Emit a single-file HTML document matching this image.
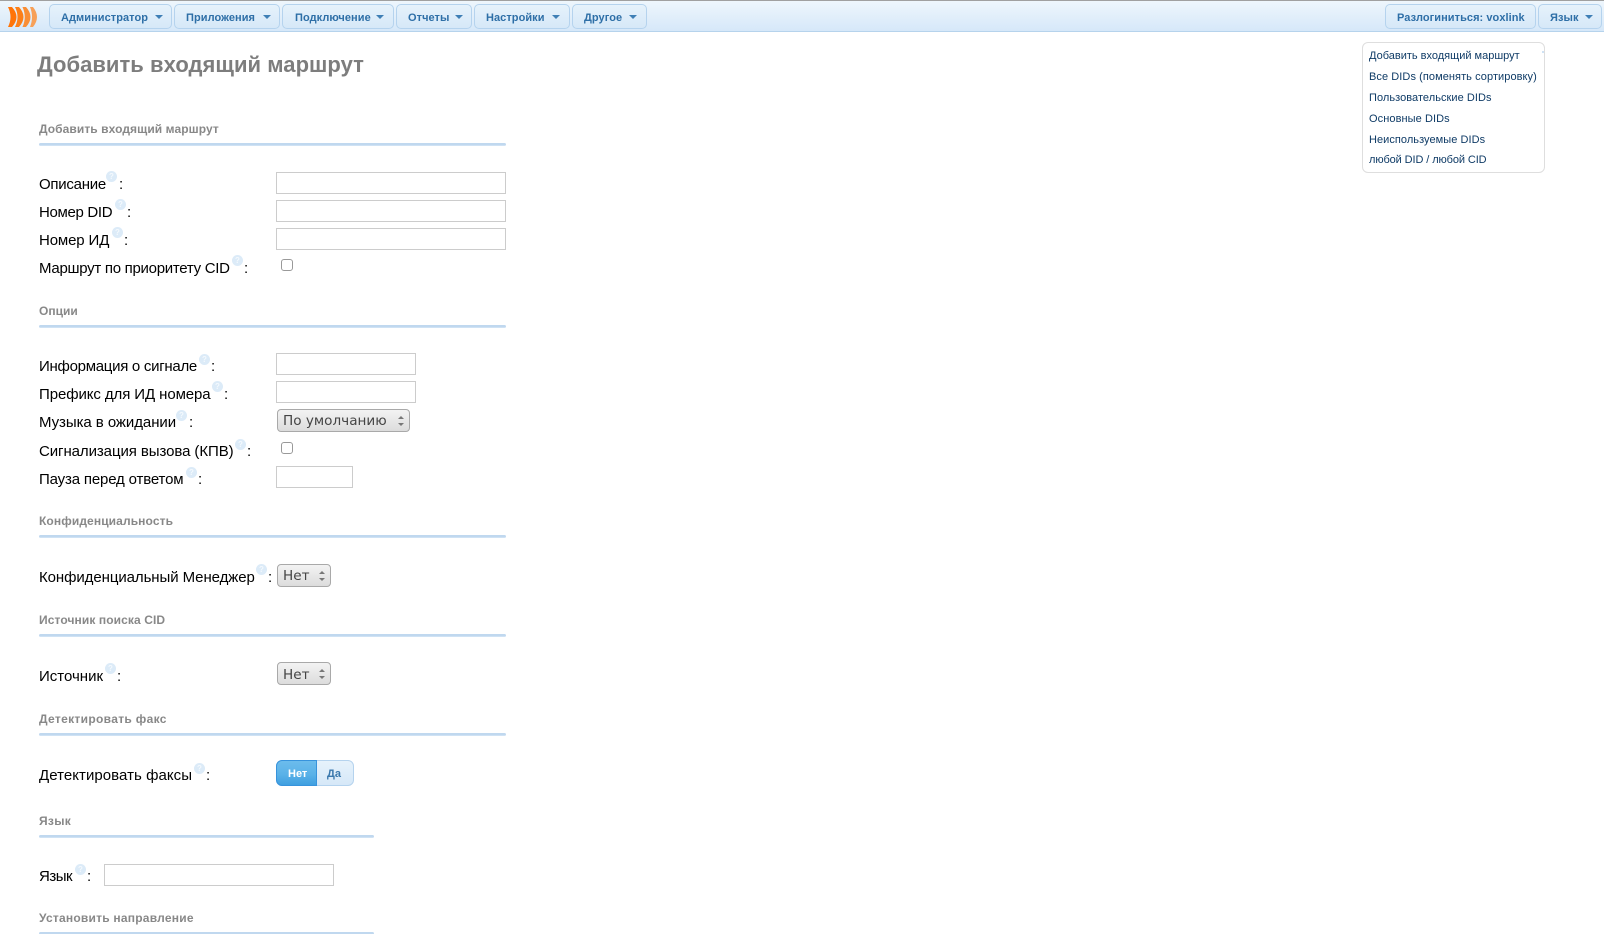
<!DOCTYPE html>
<html lang="ru"><head><meta charset="utf-8"><title>Добавить входящий маршрут</title>
<style>
html,body{margin:0;padding:0;background:#fff;width:1604px;height:934px;overflow:hidden;font-family:"Liberation Sans","DejaVu Sans",sans-serif}
body{position:relative}
#bar{position:absolute;left:0;top:0;width:1604px;background:linear-gradient(#eef6fc,#d6e8f9 100%);border-top:1px solid #a0a0a0;border-bottom:1px solid #b6d3ec;box-sizing:content-box;height:30px}
.b{position:absolute;top:4px;height:25px;box-sizing:border-box;border:1px solid #b5d3ee;border-radius:5px;background:linear-gradient(#e6f2fb,#d6e8f8)}
.bt{position:absolute;top:8px;line-height:20px;font-size:11px;font-weight:bold;color:#2e6fa7;white-space:nowrap;letter-spacing:.06px}
.c{position:absolute;top:15px;width:0;height:0;border-left:4px solid transparent;border-right:4px solid transparent;border-top:4px solid #3f7fb5}
h1{position:absolute;left:37px;top:51px;margin:0;font-size:22px;line-height:28px;font-weight:bold;color:#7d7d7d;white-space:nowrap;letter-spacing:.04px}
.s{position:absolute;left:39px;font-size:12px;line-height:16px;font-weight:bold;color:#888;white-space:nowrap}
.l{position:absolute;left:39px;width:467px;height:3px;box-sizing:border-box;background:#c0d8ef;border-bottom:1px solid #cfe2f4;border-radius:2px}
.t{position:absolute;font-size:15px;line-height:20px;color:#000;white-space:nowrap}
.i{position:absolute;width:11px;height:11px;border-radius:50%;background:#dcebf8;color:#f4f9fd;font-size:8px;line-height:11px;font-weight:bold;text-align:center}
.f{position:absolute;box-sizing:border-box;height:22px;border:1px solid #ccc;background:#fff}
.k{position:absolute;left:281px;width:12px;height:12px;box-sizing:border-box;border:1px solid #999;border-radius:3px;background:#fff}
.d{position:absolute;left:277px;height:23px;box-sizing:border-box;border:1px solid #a9a9a9;border-radius:4px;background:linear-gradient(#f3f3f3,#dcdcdc);font-family:"DejaVu Sans",sans-serif;font-size:13.6px;line-height:23px;color:#444;padding-left:5px;white-space:nowrap}
.d i{position:absolute;right:5px;width:0;height:0;border-left:3px solid transparent;border-right:3px solid transparent}
.d i.u{top:6px;border-bottom:3px solid #777}
.d i.w{top:13px;border-top:3px solid #777}
#side{position:absolute;left:1362px;top:42px;width:183px;height:131px;box-sizing:border-box;border:1px solid #dedede;border-radius:6px;background:#fff}
.m{position:absolute;left:1369px;font-size:11px;line-height:16px;color:#0f3b66;white-space:nowrap}
#tg{position:absolute;left:276px;top:760px;width:78px;height:26px;box-sizing:border-box;border:1px solid #b5d3ee;border-radius:6px;background:linear-gradient(#e6f2fb,#d6e8f8)}
#tn{position:absolute;left:276px;top:760px;width:41px;height:26px;background:linear-gradient(#6cbcec,#5ab2e8 55%,#3f9fe0);border:1px solid #3793dc;box-sizing:border-box;border-radius:6px 0 0 6px}
.tt{position:absolute;font-size:11px;line-height:16px;font-weight:bold;top:766px}
</style></head><body>
<div id="bar"></div>
<svg style="position:absolute;left:8px;top:6px" width="32" height="22" viewBox="0 0 32 22">
<path d="M0 1Q5 11 0 21L4 21Q13 11 4 1Z" fill="#ff7408"/>
<path d="M7 1Q12 11 7 21L11 21Q20 11 11 1Z" fill="#fc7f18"/>
<path d="M14.500 1Q19 11 14.500 21L18 21Q27 11 18 1Z" fill="#f98e35"/>
<path d="M22 1Q26 11 22 21L25 21Q33 11 25 1Z" fill="#f7a058"/>
</svg>
<div class="b" style="left:49px;width:123px"></div><div class="bt" style="left:61px">Администратор</div><div class="c" style="left:155px"></div>
<div class="b" style="left:174px;width:106px"></div><div class="bt" style="left:186px">Приложения</div><div class="c" style="left:263px"></div>
<div class="b" style="left:282px;width:112px"></div><div class="bt" style="left:295px">Подключение</div><div class="c" style="left:376px"></div>
<div class="b" style="left:396px;width:76px"></div><div class="bt" style="left:408px">Отчеты</div><div class="c" style="left:455px"></div>
<div class="b" style="left:474px;width:96px"></div><div class="bt" style="left:486px">Настройки</div><div class="c" style="left:552px"></div>
<div class="b" style="left:572px;width:75px"></div><div class="bt" style="left:584px">Другое</div><div class="c" style="left:629px"></div>
<div class="b" style="left:1385px;width:151px"></div><div class="bt" style="left:1397px">Разлогиниться: voxlink</div>
<div class="b" style="left:1538px;width:64px"></div><div class="bt" style="left:1550px">Язык</div><div class="c" style="left:1585px"></div>

<div id="side"></div>
<div style="position:absolute;left:1542px;top:51px;width:2px;height:2px;background:#cfe2f4"></div>
<div class="m" style="top:48px">Добавить входящий маршрут</div>
<div class="m" style="top:69px;letter-spacing:.07px">Все DIDs (поменять сортировку)</div>
<div class="m" style="top:90px;letter-spacing:.05px">Пользовательские DIDs</div>
<div class="m" style="top:111px;letter-spacing:.08px">Основные DIDs</div>
<div class="m" style="top:132px;letter-spacing:.05px">Неиспользуемые DIDs</div>
<div class="m" style="top:152px;letter-spacing:-.1px">любой DID / любой CID</div>

<h1>Добавить входящий маршрут</h1>

<div class="s" style="top:121px;letter-spacing:.08px">Добавить входящий маршрут</div><div class="l" style="top:143px"></div>
<div class="t" style="left:39px;top:175px;letter-spacing:-.25px">Описание</div><div class="i" style="left:106px;top:171px">?</div><div class="t" style="left:119px;top:175px">:</div><div class="f" style="left:276px;top:172px;width:230px"></div>
<div class="t" style="left:39px;top:203px;letter-spacing:-.33px">Номер DID</div><div class="i" style="left:115px;top:199px">?</div><div class="t" style="left:127px;top:203px">:</div><div class="f" style="left:276px;top:200px;width:230px"></div>
<div class="t" style="left:39px;top:231px;letter-spacing:-.13px">Номер ИД</div><div class="i" style="left:112px;top:227px">?</div><div class="t" style="left:124px;top:231px">:</div><div class="f" style="left:276px;top:228px;width:230px"></div>
<div class="t" style="left:39px;top:259px;letter-spacing:-.28px">Маршрут по приоритету CID</div><div class="i" style="left:232px;top:255px">?</div><div class="t" style="left:244px;top:259px">:</div><div class="k" style="top:259px"></div>

<div class="s" style="top:303px">Опции</div><div class="l" style="top:325px"></div>
<div class="t" style="left:39px;top:357px;letter-spacing:-.28px">Информация о сигнале</div><div class="i" style="left:199px;top:354px">?</div><div class="t" style="left:211px;top:357px">:</div><div class="f" style="left:276px;top:353px;width:140px"></div>
<div class="t" style="left:39px;top:385px;letter-spacing:-.09px">Префикс для ИД номера</div><div class="i" style="left:212px;top:381px">?</div><div class="t" style="left:224px;top:385px">:</div><div class="f" style="left:276px;top:381px;width:140px"></div>
<div class="t" style="left:39px;top:413px;letter-spacing:-.06px">Музыка в ожидании</div><div class="i" style="left:176px;top:410px">?</div><div class="t" style="left:189px;top:413px">:</div><div class="d" style="top:409px;width:133px">По умолчанию<i class="u"></i><i class="w"></i></div>
<div class="t" style="left:39px;top:442px;letter-spacing:-.08px">Сигнализация вызова (КПВ)</div><div class="i" style="left:235px;top:439px">?</div><div class="t" style="left:247px;top:442px">:</div><div class="k" style="top:442px"></div>
<div class="t" style="left:39px;top:470px;letter-spacing:-.16px">Пауза перед ответом</div><div class="i" style="left:186px;top:467px">?</div><div class="t" style="left:198px;top:470px">:</div><div class="f" style="left:276px;top:466px;width:77px"></div>

<div class="s" style="top:513px;letter-spacing:.11px">Конфиденциальность</div><div class="l" style="top:535px"></div>
<div class="t" style="left:39px;top:568px;letter-spacing:-.08px">Конфиденциальный Менеджер</div><div class="i" style="left:256px;top:564px">?</div><div class="t" style="left:268px;top:568px">:</div><div class="d" style="top:564px;width:54px">Нет<i class="u"></i><i class="w"></i></div>

<div class="s" style="top:612px;letter-spacing:.1px">Источник поиска CID</div><div class="l" style="top:634px"></div>
<div class="t" style="left:39px;top:667px">Источник</div><div class="i" style="left:105px;top:663px">?</div><div class="t" style="left:117px;top:667px">:</div><div class="d" style="top:662px;width:54px;line-height:24px">Нет<i class="u"></i><i class="w"></i></div>

<div class="s" style="top:711px;letter-spacing:.33px">Детектировать факс</div><div class="l" style="top:733px"></div>
<div class="t" style="left:39px;top:766px;letter-spacing:.05px">Детектировать факсы</div><div class="i" style="left:194px;top:763px">?</div><div class="t" style="left:206px;top:766px">:</div>
<div id="tg"></div><div id="tn"></div><div class="tt" style="left:288px;color:#fff">Нет</div><div class="tt" style="left:327px;color:#3a78ad">Да</div>

<div class="s" style="top:813px;letter-spacing:.3px">Язык</div><div class="l" style="top:835px;width:335px"></div>
<div class="t" style="left:39px;top:867px;letter-spacing:-.5px">Язык</div><div class="i" style="left:75px;top:864px">?</div><div class="t" style="left:87px;top:867px">:</div><div class="f" style="left:104px;top:864px;width:230px"></div>

<div class="s" style="top:910px;letter-spacing:.23px">Установить направление</div><div class="l" style="top:932px;width:335px"></div>
</body></html>
